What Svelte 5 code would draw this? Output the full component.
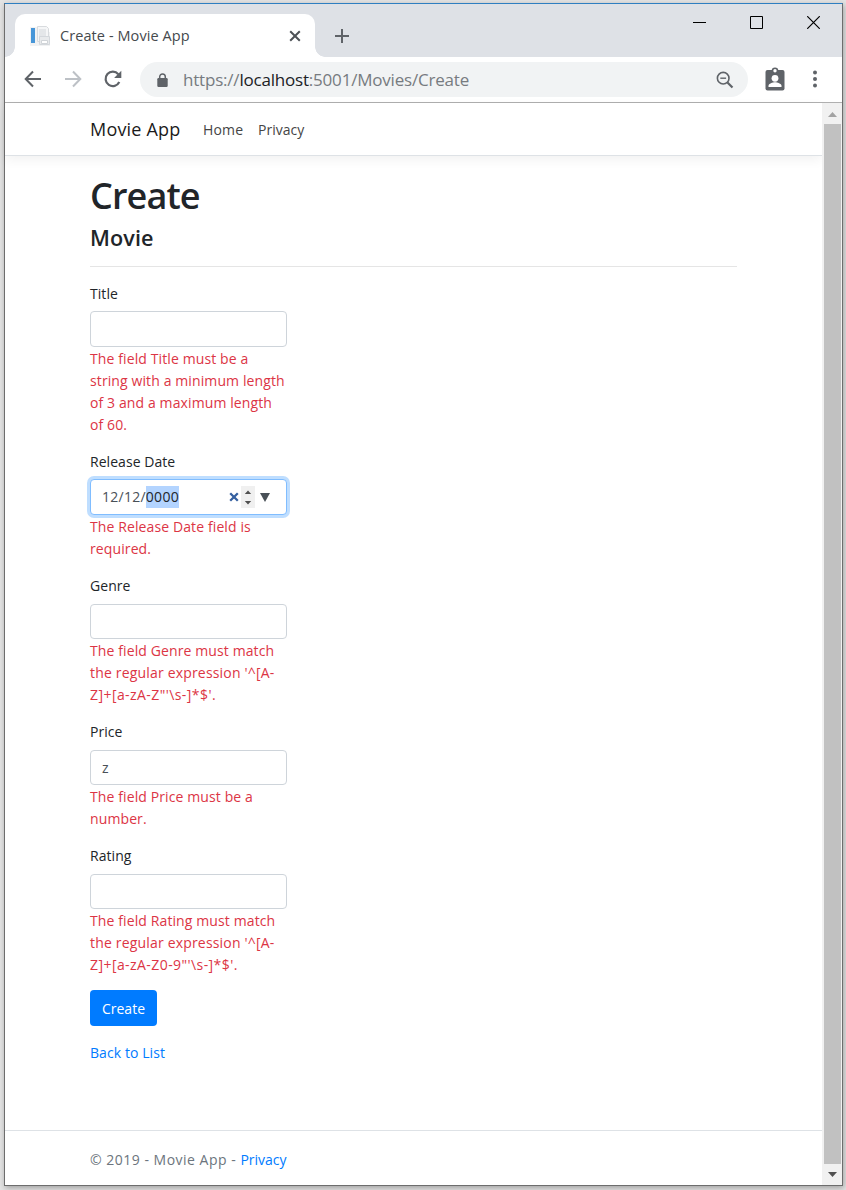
<script>
  const fields = [
    {
      name: 'Title', kind: 'text', value: '', tall: true,
      error: ['The field Title must be a', 'string with a minimum length', 'of 3 and a maximum length', 'of 60.']
    },
    {
      name: 'Release Date', kind: 'date', tall: true,
      error: ['The Release Date field is', 'required.']
    },
    {
      name: 'Genre', kind: 'text', value: '',
      error: ['The field Genre must match', "the regular expression '^[A-", "Z]+[a-zA-Z\"'\\s-]*$'."]
    },
    {
      name: 'Price', kind: 'text', value: 'z',
      error: ['The field Price must be a', 'number.']
    },
    {
      name: 'Rating', kind: 'text', value: '',
      error: ['The field Rating must match', "the regular expression '^[A-", "Z]+[a-zA-Z0-9\"'\\s-]*$'."]
    }
  ];
</script>

<div class="desktop">
  <div class="window">
    <div class="tabstrip">
      <div class="tab">
        <svg class="favicon" width="20" height="20" viewBox="0 0 20 20">
          <path d="M0 1h16v5h4v14H0z" fill="#f1f2f3" />
          <rect x="1" y="2" width="4" height="15" fill="#4796d8" />
          <path d="M7.500 .5h9l2 2v13h-11z" fill="#f5f6f7" stroke="#d8dbde" />
          <path d="M9 4h7M9 6h7M9 8h7M9 10h7" stroke="#d3d7db" />
          <path d="M9.500 10.500h10v8h-10z" fill="#e8eaec" stroke="#d4d8dc" />
          <path d="M11.500 14.500h6v3h-6z" fill="#fff" stroke="#d0d4d8" />
        </svg>
        <span class="tab-title">Create - Movie App</span>
        <svg class="tab-close" width="12" height="12" viewBox="0 0 12 12"><path d="M1.200 1.200l9.600 9.600M10.800 1.200L1.200 10.800" stroke="#4d5156" stroke-width="2" /></svg>
      </div>
      <svg class="plus" width="16" height="16" viewBox="0 0 16 16"><path d="M8 1v14M1 8h14" stroke="#5f6368" stroke-width="2" /></svg>
      <div class="controls">
        <svg width="13" height="13" viewBox="0 0 13 13"><path d="M0 6.500h13" stroke="#000" /></svg>
        <svg width="13" height="13" viewBox="0 0 13 13"><path d="M.5.5h12v12H.5z" fill="none" stroke="#000" /></svg>
        <svg width="13" height="13" viewBox="0 0 13 13"><path d="M.2.200l12.600 12.600M12.800.2L.2 12.800" stroke="#000" stroke-width="1.200" /></svg>
      </div>
    </div>

    <div class="toolbar">
      <svg class="back" width="18" height="18" viewBox="0 0 18 18"><path d="M17 9H2M9 1.500L1.700 9 9 16.500" fill="none" stroke="#5f6368" stroke-width="2" /></svg>
      <svg class="forward" width="18" height="18" viewBox="0 0 18 18"><path d="M1 9h15M9 1.500L16.300 9 9 16.500" fill="none" stroke="#bdc1c6" stroke-width="2" /></svg>
      <svg class="reload" width="18" height="18" viewBox="0 0 18 18">
        <path d="M15.300 12A7.200 7.200 0 1 1 14.300 4.200" fill="none" stroke="#5f6368" stroke-width="2.200" />
        <path d="M17.300 0.800v7.200h-7.200z" fill="#5f6368" />
      </svg>
      <div class="omnibox">
        <svg class="lock" width="11" height="14" viewBox="0 0 11 14">
          <path d="M2.700 6V3.800a2.800 2.800 0 0 1 5.600 0V6" fill="none" stroke="#5f6368" stroke-width="1.500" />
          <rect x="0.300" y="5" width="10.400" height="9" rx="1.200" fill="#5f6368" />
        </svg>
        <span class="url">https://<b>localhost</b>:5001/Movies/Create</span>
        <svg class="zoomicon" width="18" height="18" viewBox="0 0 18 18">
          <circle cx="7.200" cy="7.200" r="5.800" fill="none" stroke="#5f6368" stroke-width="1.600" />
          <path d="M4.300 7.200h5.800" stroke="#5f6368" stroke-width="1.400" />
          <path d="M11.500 11.500l5 5" stroke="#5f6368" stroke-width="2.200" />
        </svg>
      </div>
      <svg class="profile" width="20" height="24" viewBox="0 0 20 24">
        <rect x="0.500" y="3" width="19" height="20.500" rx="2" fill="#5f6368" />
        <circle cx="10" cy="3.700" r="2.500" fill="#fff" stroke="#5f6368" stroke-width="1.600" />
        <circle cx="10" cy="11.300" r="3.400" fill="#fff" />
        <path d="M3.500 20v-1.200c0-2.300 4.300-3.500 6.500-3.500s6.500 1.200 6.500 3.500V20z" fill="#fff" />
      </svg>
      <svg class="dots" width="4" height="18" viewBox="0 0 4 18" fill="#5f6368"><circle cx="2" cy="2.500" r="2" /><circle cx="2" cy="9" r="2" /><circle cx="2" cy="15.400" r="2" /></svg>
    </div>

    <div class="viewport">
      <div class="page">
        <header>
          <a class="brand" href="#home">Movie App</a>
          <a class="home" href="#home">Home</a>
          <a class="privacy" href="#privacy">Privacy</a>
        </header>
        <main>
          <h1>Create</h1>
          <h4>Movie</h4>
          <hr />
          <form>
            {#each fields as field}
              <div class="group">
                <span class="label">{field.name}</span>
                {#if field.kind === 'date'}
                  <div class="control tall focus">
                    <span class="date">12/12/<mark>0000</mark></span>
                    <svg class="clear" width="10" height="10" viewBox="0 0 10 10"><path d="M1.200 1.200l7.600 7.600M8.800 1.200L1.200 8.800" stroke="#3560a0" stroke-width="2.300" /></svg>
                    <svg class="spin" width="14" height="22" viewBox="0 0 14 22"><rect width="14" height="22" fill="#f0f0f0" /><path d="M3.800 8L7 4.600 10.200 8zM3.800 15h6.400L7 18.400z" fill="#505050" /></svg>
                    <svg class="drop" width="10" height="9" viewBox="0 0 10 9"><path d="M0 0h10L5 9z" fill="#495057" /></svg>
                  </div>
                {:else}
                  <div class="control" class:tall={field.tall}>{field.value}</div>
                {/if}
                <div class="error">
                  {#each field.error as line}
                    <span class:regex={line.includes('[A-')} class:pattern={line.startsWith('Z]')}>{line}</span>
                  {/each}
                </div>
              </div>
            {/each}
            <button type="button">Create</button>
          </form>
          <a class="list" href="#list">Back to List</a>
        </main>
        <footer><span>© 2019 - Movie App -{' '}</span><a href="#privacy">Privacy</a></footer>
      </div>
      <div class="scrollbar">
        <svg width="17" height="21" viewBox="0 0 17 21"><path d="M4 14h9l-4.500-5z" fill="#a3a3a3" /></svg>
        <div class="thumb"></div>
        <svg width="17" height="21" viewBox="0 0 17 21"><path d="M4 8h9l-4.500 5z" fill="#505050" /></svg>
      </div>
    </div>
  </div>
</div>

<style>
  * { box-sizing: border-box; }
  a { color: #007bff; text-decoration: none; }
  svg { display: block; flex: none; }
  .desktop {
    width: 846px; height: 1190px; padding: 3px 3px 4px 4px; overflow: hidden;
    background: #e4e4e4; font: 14px/22px "Open Sans", sans-serif; color: #212529;
  }
  .window {
    width: 839px; height: 1183px; display: flex; flex-direction: column; background: #fff;
    border: 1px solid #6d6d6d; border-top-color: #2f7fc1;
    box-shadow: 1px 2px 6px rgba(0, 0, 0, .3);
  }
  .tabstrip { height: 53px; flex: none; display: flex; background: #dee1e6; }
  .tab {
    position: relative; width: 300px; height: 43px; margin: 10px 0 0 10px; border-radius: 10px 10px 0 0;
    background: #fff; display: flex; align-items: center; padding: 0 15px 0 15px;
  }
  .tab::before, .tab::after { content: ""; position: absolute; bottom: 0; width: 10px; height: 10px; }
  .tab::before { left: -10px; background: radial-gradient(circle at 0 0, #dee1e6 9.5px, #fff 10px); }
  .tab::after { right: -10px; background: radial-gradient(circle at 100% 0, #dee1e6 9.5px, #fff 10px); }
  .tab-title { flex: 1; margin-left: 10px; font-size: 14.5px; color: #45494d; white-space: pre; letter-spacing: .08px; }
  .tab-close { margin-right: -1px; }
  .plus { margin: 24px 0 0 19px; }
  .controls { margin: 12px 22px 0 auto; display: flex; gap: 44px; }
  .toolbar { height: 46px; flex: none; display: flex; align-items: center; border-bottom: 1px solid #b0b0b0; }
  .toolbar > svg { margin-bottom: 2px; }
  .back { margin-left: 19px; }
  .forward { margin-left: 22px; }
  .reload { margin-left: 22px; }
  .omnibox {
    width: 608px; height: 35px; margin-left: 18px; padding: 0 14px 0 17px; border-radius: 18px;
    background: #f1f3f4; display: flex; align-items: center;
  }
  .url { flex: 1; margin-left: 15px; font-size: 17px; color: #777b80; letter-spacing: -.2px; }
  .url b { font-weight: 400; color: #202124; }
  .profile { margin-left: 17px; }
  .dots { margin-left: 28px; }
  .viewport { flex: 1; display: flex; min-height: 0; }
  .page { width: 817px; display: flex; flex-direction: column; }
  header {
    height: 53px; padding-left: 85px; flex: none; display: flex; align-items: center;
    border-bottom: 1px solid #dee2e6; box-shadow: 0 4px 11px rgba(0, 0, 0, .055);
  }
  header a { color: #454545; padding-top: 2px; }
  header .brand { font-size: 18px; color: #1b1b1b; width: 113px; letter-spacing: .2px; padding-top: 0; }
  header .home { width: 55px; letter-spacing: .15px; }
  main { padding: 18px 0 0 85px; flex: 1; display: flex; flex-direction: column; align-items: flex-start; }
  h1 { margin: 0; font-size: 36px; line-height: 44px; font-weight: 600; letter-spacing: -.9px; }
  h4 { margin: 7px 0 0; font-size: 21.6px; line-height: 26px; font-weight: 600; letter-spacing: .1px; }
  hr { width: 647px; height: 1px; margin: 15px 0 16px; border: 0; background: #e5e5e5; }
  form { width: 197px; display: flex; flex-direction: column; align-items: flex-start; }
  .group { width: 197px; display: flex; flex-direction: column; margin-bottom: 15px; }
  .label { height: 22px; margin-bottom: 7px; letter-spacing: .05px; }
  .control {
    height: 35px; border: 1px solid #ced4da; border-radius: 4px; background: #fff; color: #495057;
    padding: 0 11px; display: flex; align-items: center; margin-bottom: 1px;
  }
  .tall { height: 36px; margin-top: -1px; }
  .focus { border-color: #80bdff; box-shadow: 0 0 0 3px #bfdeff; }
  .date { flex: 1; white-space: nowrap; letter-spacing: .26px; }
  mark { display: inline-block; background: #b3d4ff; color: #212529; }
  .clear { margin-right: 2px; }
  .spin { margin-right: 5px; }
  .drop { margin-right: 5px; }
  .error { display: flex; flex-direction: column; color: #dc3545; white-space: pre; letter-spacing: .11px; }
  .regex { letter-spacing: .18px; }
  .pattern { letter-spacing: .43px; }
  button {
    width: 67px; height: 36px; margin-top: -1px; padding: 1px 0 0; border: 0; border-radius: 4px;
    background: #007bff; color: #fff; font: inherit;
  }
  .list { margin-top: 16px; letter-spacing: .08px; }
  footer { height: 55px; flex: none; padding: 18px 0 0 85px; border-top: 1px solid #dee2e6; color: #6c757d; white-space: pre; }
  footer span { letter-spacing: .5px; }
  .scrollbar { width: 20px; padding: 0 1px 0 2px; background: #f1f1f1; display: flex; flex-direction: column; }
  .thumb { flex: 1; background: #c1c1c1; }
</style>
